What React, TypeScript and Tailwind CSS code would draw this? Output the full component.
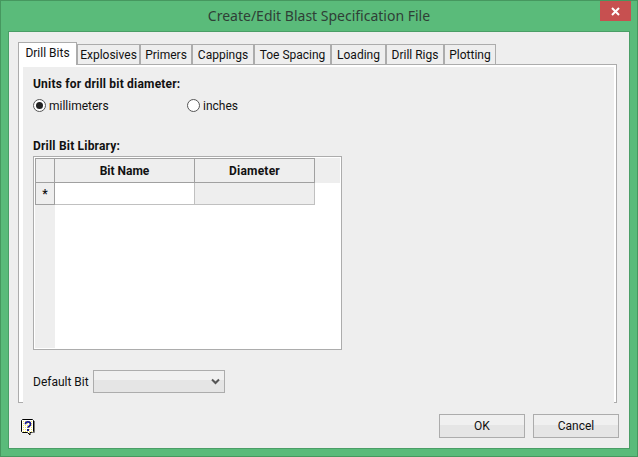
const tabs = [
  { label: 'Explosives', width: 'w-[63px]' },
  { label: 'Primers', width: 'w-[52px]' },
  { label: 'Cappings', width: 'w-[62px]' },
  { label: 'Toe Spacing', width: 'w-[77px]' },
  { label: 'Loading', width: 'w-[55px]' },
  { label: 'Drill Rigs', width: 'w-[58px]' },
  { label: 'Plotting', width: 'w-[52px]' },
]

function Radio({ checked }: { checked?: boolean }) {
  return (
    <span className="flex h-[13px] w-[13px] shrink-0 items-center justify-center rounded-full border border-[#555] bg-white">
      {checked && <span className="h-[7px] w-[7px] rounded-full bg-[#222]" />}
    </span>
  )
}

function DialogButton({ label }: { label: string }) {
  return (
    <button
      type="button"
      className="h-[24px] w-[86px] border border-[#acacac] bg-[linear-gradient(#f0f0f0_0%,#f0f0f0_45%,#e5e5e5_45%,#e5e5e5_100%)] text-[12px] text-[#111]"
    >
      {label}
    </button>
  )
}

function HelpIcon() {
  return (
    <svg width="15" height="17" viewBox="0 0 15 17" className="shrink-0">
      <defs>
        <pattern id="dots" width="2" height="2" patternUnits="userSpaceOnUse">
          <rect width="2" height="2" fill="#ffffff" />
          <rect width="1" height="1" fill="#f2e65c" />
        </pattern>
      </defs>
      <path d="M1.500 .5h10l1 1v11l-1 1h-2.500v2.500l-2.500-2.500h-5l-1-1v-11z" fill="url(#dots)" stroke="#000" />
      <path d="M13.500 2v11.500h-3" fill="none" stroke="#777" />
      <path d="M4.500 5.200c0-3 5-3 5 0 0 2-2.500 2-2.500 3.600" fill="none" stroke="#16168c" strokeWidth="1.700" />
      <rect x="6" y="10" width="2" height="2" fill="#16168c" />
    </svg>
  )
}

export default function App() {
  return (
    <div className="relative flex h-[457px] w-[638px] flex-col border border-[#46975f] bg-[#5abb7a] px-[7px] pb-[7px] font-['Roboto',sans-serif] text-[12px] leading-none text-[#111]">
      {/* Title bar */}
      <div className="flex h-[30px] shrink-0 items-center justify-center pb-[1px] font-['Noto_Sans',sans-serif] text-[14px] text-[#2f3f36]">
        Create/Edit Blast Specification File
      </div>
      <div
        aria-label="Close"
        className="absolute right-[6px] top-0 flex h-[20px] w-[31px] items-center justify-center bg-[#c75050] text-white"
      >
        <svg width="9" height="9" viewBox="0 0 9 9">
          <path d="M1 1l7 7M8 1l-7 7" stroke="#fff" strokeWidth="2" />
        </svg>
      </div>

      {/* Client area */}
      <div className="flex min-h-0 flex-1 flex-col border border-[#4a9e66] bg-[#eeeeee] pl-[9px] pr-[12px] pt-[9px]">
        <div className="flex h-[23px] shrink-0 items-end">
          <div className="z-10 -mb-[1px] flex h-[23px] w-[59px] items-center justify-center border border-b-0 border-[#acacac] bg-white pb-[2px]">
            Drill Bits
          </div>
          {tabs.map((tab) => (
            <div
              key={tab.label}
              className={`flex h-[20px] items-center justify-center border border-b-0 border-[#acacac] bg-[#eeeeee] ${tab.width}`}
            >
              {tab.label}
            </div>
          ))}
        </div>

        {/* Tab pane */}
        <div className="flex h-[339px] shrink-0 flex-col border-t border-[#acacac]">
          <div className="h-[2px] shrink-0 border-x border-[#acacac] bg-white" />
          <div className="flex min-h-0 flex-1">
            <div className="w-[5px] shrink-0 border-b border-l border-[#acacac] bg-white" />
            <div className="flex-1 px-[10px] pt-[11px]">
              <div className="h-[15px] font-bold tracking-[0.2px]">Units for drill bit diameter:</div>
              <div className="mt-[5px] flex h-[15px] items-center">
                <div className="flex w-[154px] items-center gap-[3px]">
                  <Radio checked />
                  <span>millimeters</span>
                </div>
                <div className="flex items-center gap-[3px]">
                  <Radio />
                  <span>inches</span>
                </div>
              </div>

              <div className="mt-[27px] h-[15px] font-bold tracking-[0.2px]">Drill Bit Library:</div>
              <div className="mt-[1px] h-[194px] w-[309px] border border-[#acacac] bg-white p-[1px]">
                <div className="flex h-full flex-col">
                  <div className="flex h-[25px] shrink-0 bg-[#eeeeee]">
                    <div className="w-[20px] border border-[#a0a0a0]" />
                    <div className="flex w-[140px] items-center justify-center border-y border-r border-[#a0a0a0] font-bold">
                      Bit Name
                    </div>
                    <div className="flex w-[120px] items-center justify-center border-y border-r border-[#a0a0a0] font-bold tracking-[0.2px]">
                      Diameter
                    </div>
                  </div>
                  <div className="flex h-[22px] shrink-0">
                    <div className="flex w-[20px] items-center justify-center border-x border-b border-[#a0a0a0] bg-[#eeeeee] font-bold">
                      *
                    </div>
                    <div className="w-[140px] border-b border-r border-[#c0c0c0]" />
                    <div className="w-[120px] border-b border-r border-[#c0c0c0] bg-[#eeeeee]" />
                  </div>
                  <div className="w-[20px] flex-1 bg-[#eeeeee]" />
                </div>
              </div>

              <div className="mt-[20px] flex items-center gap-[5px]">
                <span className="w-[55px] whitespace-nowrap">Default Bit</span>
                <div className="flex h-[23px] w-[132px] items-center justify-end border border-[#acacac] bg-[linear-gradient(#f0f0f0_0%,#f0f0f0_42%,#e5e5e5_42%,#e5e5e5_100%)] pr-[4px]">
                  <svg width="9" height="7" viewBox="0 0 9 7">
                    <path d="M1 1.500l3.500 3.500 3.500-3.500" fill="none" stroke="#555" strokeWidth="2" />
                  </svg>
                </div>
              </div>
            </div>
            <div className="w-[3px] shrink-0 border-b border-r border-[#acacac] bg-white" />
          </div>
        </div>

        {/* Footer */}
        <div className="-mr-[2px] flex flex-1 items-start justify-between pl-[3px] pt-[11px]">
          <div className="pt-[5px]">
            <HelpIcon />
          </div>
          <div className="flex gap-[8px]">
            <DialogButton label="OK" />
            <DialogButton label="Cancel" />
          </div>
        </div>
      </div>
    </div>
  )
}
